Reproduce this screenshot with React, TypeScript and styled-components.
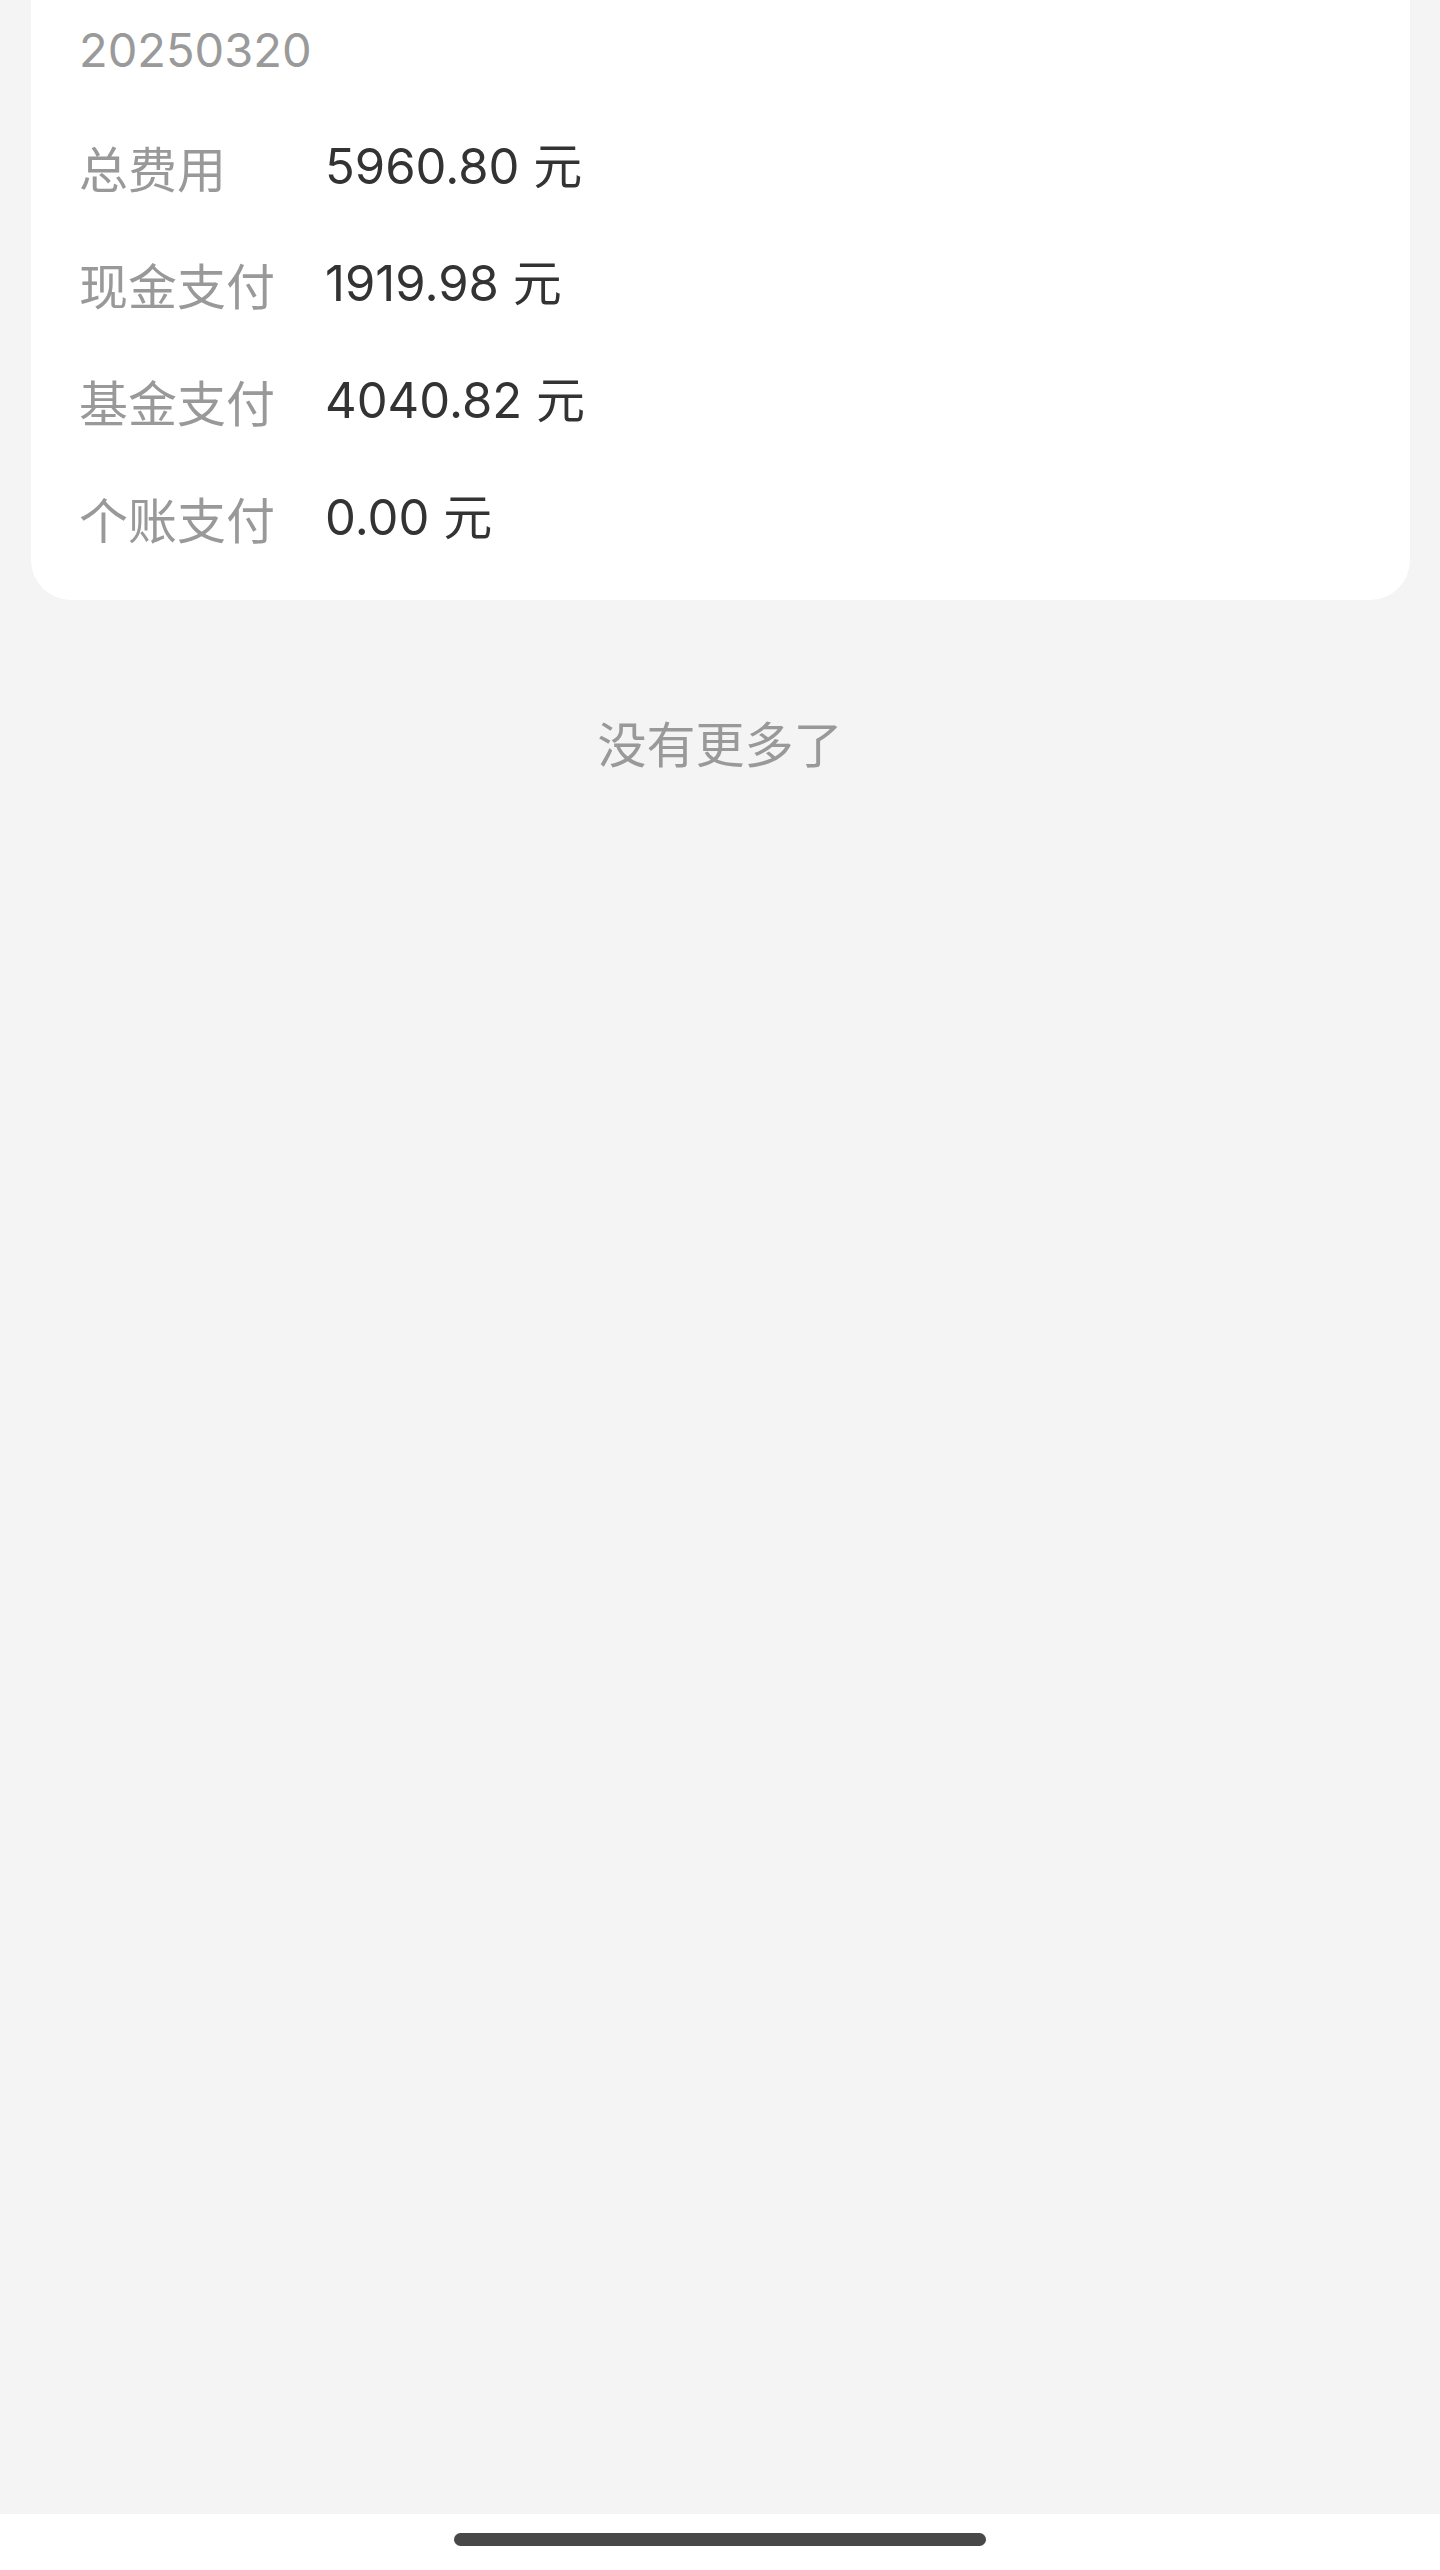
import React from "react";
import styled, { createGlobalStyle } from "styled-components";

const Global = createGlobalStyle`
  html, body {
    margin: 0;
    padding: 0;
    background: #f4f4f4;
  }
  body {
    font-family: "Inter", "Noto Sans CJK SC", "Noto Sans", sans-serif;
    overflow: hidden;
  }
`;

const Screen = styled.div`
  width: 1440px;
  height: 2570px;
  display: flex;
  flex-direction: column;
  overflow: hidden;
  background: #f4f4f4;
`;

const Content = styled.div`
  flex: 1;
  display: flex;
  flex-direction: column;
`;

const Card = styled.div`
  margin: -9px 30px 0 31px;
  padding: 0 48px 24px;
  background: #ffffff;
  border-radius: 0 0 40px 40px;
  display: flex;
  flex-direction: column;
`;

const Row = styled.div`
  height: 117px;
  display: flex;
  align-items: center;
  font-size: 49px;
  line-height: 1;
`;

const DateText = styled.span`
  color: #9a9a9a;
  font-size: 47px;
`;

const Label = styled.span`
  width: 246px;
  flex-shrink: 0;
  color: #999999;
  font-family: "Noto Sans CJK SC", sans-serif;
`;

const Value = styled.span`
  color: #333333;
`;

const Footer = styled.div`
  margin-top: 108px;
  height: 68px;
  line-height: 68px;
  text-align: center;
  color: #999999;
  font-size: 49px;
  font-family: "Noto Sans CJK SC", sans-serif;
`;

const NavBar = styled.div`
  height: 56px;
  flex-shrink: 0;
  background: #ffffff;
  display: flex;
  justify-content: center;
  padding-top: 19px;
  box-sizing: border-box;
`;

const HomeIndicator = styled.div`
  width: 532px;
  height: 13px;
  border-radius: 7px;
  background: #484848;
`;

const rows = [
  { label: "总费用", value: "5960.80 元" },
  { label: "现金支付", value: "1919.98 元" },
  { label: "基金支付", value: "4040.82 元" },
  { label: "个账支付", value: "0.00 元" },
];

export default function App() {
  return (
    <>
      <Global />
      <Screen>
        <Content>
          <Card>
            <Row>
              <DateText>20250320</DateText>
            </Row>
            {rows.map((r) => (
              <Row key={r.label}>
                <Label>{r.label}</Label>
                <Value>{r.value}</Value>
              </Row>
            ))}
          </Card>
          <Footer>没有更多了</Footer>
        </Content>
        <NavBar>
          <HomeIndicator />
        </NavBar>
      </Screen>
    </>
  );
}
